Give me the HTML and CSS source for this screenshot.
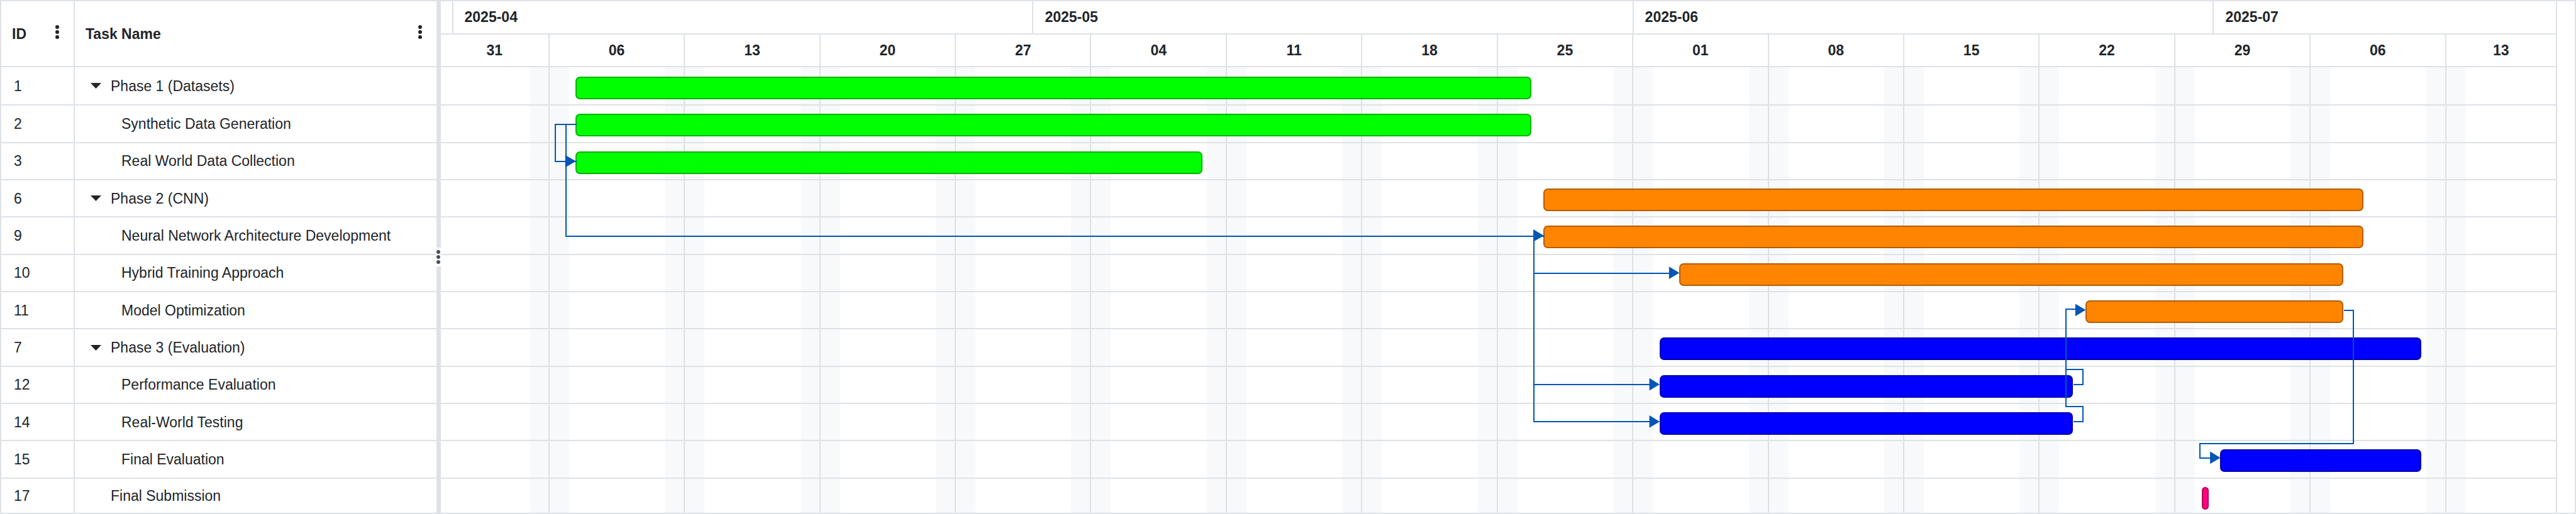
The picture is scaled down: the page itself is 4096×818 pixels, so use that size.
FILE: index.html
```html
<!DOCTYPE html>
<html lang="en">
<head>
<meta charset="utf-8">
<title>Project schedule</title>
<link rel="stylesheet" href="styles.css">
</head>
<body>
<main class="gantt">
  <table class="tasks">
    <thead>
      <tr>
        <th scope="col" class="col-id"><span>ID</span><button class="menu" type="button" aria-label="ID column menu"><svg viewBox="0 0 6 32"><circle cx="3" cy="5" r="3"/><circle cx="3" cy="13" r="3"/><circle cx="3" cy="21" r="3"/></svg></button></th>
        <th scope="col" class="col-name"><span>Task Name</span><button class="menu" type="button" aria-label="Task Name column menu"><svg viewBox="0 0 6 32"><circle cx="3" cy="5" r="3"/><circle cx="3" cy="13" r="3"/><circle cx="3" cy="21" r="3"/></svg></button></th>
      </tr>
    </thead>
    <tbody>
      <tr><td class="id">1</td><td class="name"><button class="toggle" type="button" aria-label="Collapse Phase 1"><svg viewBox="0 0 17 9"><path d="M0 0h17L8.5 9z"/></svg></button>Phase 1 (Datasets)</td></tr>
      <tr><td class="id">2</td><td class="name child">Synthetic Data Generation</td></tr>
      <tr><td class="id">3</td><td class="name child">Real World Data Collection</td></tr>
      <tr><td class="id">6</td><td class="name"><button class="toggle" type="button" aria-label="Collapse Phase 2"><svg viewBox="0 0 17 9"><path d="M0 0h17L8.5 9z"/></svg></button>Phase 2 (CNN)</td></tr>
      <tr><td class="id">9</td><td class="name child">Neural Network Architecture Development</td></tr>
      <tr><td class="id">10</td><td class="name child">Hybrid Training Approach</td></tr>
      <tr><td class="id">11</td><td class="name child">Model Optimization</td></tr>
      <tr><td class="id">7</td><td class="name"><button class="toggle" type="button" aria-label="Collapse Phase 3"><svg viewBox="0 0 17 9"><path d="M0 0h17L8.5 9z"/></svg></button>Phase 3 (Evaluation)</td></tr>
      <tr><td class="id">12</td><td class="name child">Performance Evaluation</td></tr>
      <tr><td class="id">14</td><td class="name child">Real-World Testing</td></tr>
      <tr><td class="id">15</td><td class="name child">Final Evaluation</td></tr>
      <tr><td class="id">17</td><td class="name leaf">Final Submission</td></tr>
    </tbody>
  </table>

  <div class="splitter" role="separator" aria-orientation="vertical">
    <span class="grip"><i></i><i></i><i></i></span>
  </div>

  <section class="timeline" aria-label="Timeline">
    <div class="months">
      <div></div><div>2025-04</div><div>2025-05</div><div>2025-06</div><div>2025-07</div>
    </div>
    <div class="weeks">
      <div>31</div><div>06</div><div>13</div><div>20</div><div>27</div><div>04</div><div>11</div><div>18</div><div>25</div><div>01</div><div>08</div><div>15</div><div>22</div><div>29</div><div>06</div><div>13</div>
    </div>
    <div class="chart">
      <div class="backdrop">
        <div></div><div></div><div></div><div></div><div></div><div></div><div></div><div></div><div></div><div></div><div></div><div></div><div></div><div></div><div></div><div></div>
      </div>
      <div class="lanes">
        <div class="lane"><div class="bar green" style="margin-left:6.37%;width:45.15%"></div></div>
        <div class="lane"><div class="bar green" style="margin-left:6.37%;width:45.15%"></div></div>
        <div class="lane"><div class="bar green" style="margin-left:6.37%;width:29.61%"></div></div>
        <div class="lane"><div class="bar orange" style="margin-left:52.11%;width:38.74%"></div></div>
        <div class="lane"><div class="bar orange" style="margin-left:52.11%;width:38.74%"></div></div>
        <div class="lane"><div class="bar orange" style="margin-left:58.52%;width:31.39%"></div></div>
        <div class="lane"><div class="bar orange" style="margin-left:77.72%;width:12.19%"></div></div>
        <div class="lane"><div class="bar blue" style="margin-left:57.59%;width:35.99%"></div></div>
        <div class="lane"><div class="bar blue" style="margin-left:57.59%;width:19.54%"></div></div>
        <div class="lane"><div class="bar blue" style="margin-left:57.59%;width:19.54%"></div></div>
        <div class="lane"><div class="bar blue" style="margin-left:84.08%;width:9.5%"></div></div>
        <div class="lane"><div class="bar pink" style="margin-left:83.2%;width:0.35%"></div></div>
      </div>
      <svg class="links" viewBox="1275 195 6126 1293" preserveAspectRatio="none" aria-hidden="true">
        <path class="line" d="M1668 361H1607V469H1668"/>
        <path class="line" d="M1637 361V685H4470"/>
        <path class="line" d="M4439 685V1225H4775M4439 793H4832M4439 1117H4775"/>
        <path class="line" d="M6000 1117H6028V1072H5978M6000 1225H6028V1180H5978V898H6008"/>
        <path class="line" d="M6783 901H6811V1288H6367V1330H6398"/>
        <path class="head" d="M1635 450l31 18-31 18zM4437 666l31 18-31 18zM4830 774l30 18-30 18zM4773 1098l30 18-30 18zM4773 1206l30 18-30 18zM6006 882l30 18-30 18zM6396 1311l30 18-30 18z"/>
      </svg>
    </div>
  </section>
</main>
</body>
</html>
```

FILE: styles.css
```css
* {
  box-sizing: border-box;
}

body {
  margin: 0;
  background: #fff;
  color: #212529;
  font: 23px/28px "Liberation Sans", Arial, sans-serif;
}

.gantt {
  --line: 2px solid #dee2e6;
  --rows: 111fr repeat(10, 108fr) 99fr;
  display: grid;
  grid-template-columns: 1260fr 12fr 6126fr 51fr;
  grid-template-rows: minmax(0, 1fr);
  min-height: 100vh;
  border: var(--line);
}

/* Task list */
.tasks {
  display: grid;
  grid-template-columns: 213fr 1047fr;
  grid-template-rows: 192fr var(--rows);
  min-width: 0;
}

.tasks thead,
.tasks tbody,
.tasks tr {
  display: contents;
}

.tasks th,
.tasks td {
  display: flex;
  align-items: center;
  min-width: 0;
  padding: 0;
  border-bottom: var(--line);
  white-space: nowrap;
}

.tasks tr:last-child td {
  border-bottom: 0;
}

.tasks tr > :first-child {
  border-right: var(--line);
}

.tasks th {
  justify-content: space-between;
  padding: 0 23px 0 17px;
}

.tasks .id {
  padding-left: 20px;
}

.tasks .name {
  gap: 15px;
  padding-left: 25px;
}

.tasks .leaf {
  padding-left: 57px;
}

.tasks .child {
  padding-left: 74px;
}

.menu,
.toggle {
  display: block;
  padding: 0;
  border: 0;
  background: none;
  color: inherit;
}

.menu svg {
  display: block;
  width: 6px;
  height: 32px;
  fill: currentColor;
}

.toggle svg {
  display: block;
  width: 17px;
  height: 9px;
  fill: currentColor;
}

/* Splitter */
.splitter {
  display: flex;
  align-items: center;
  background: #dee2e6;
}

.grip {
  display: flex;
  flex-direction: column;
  align-items: center;
  justify-content: center;
  gap: 2px;
  width: 100%;
  height: 30px;
  background: #fff;
}

.grip i {
  width: 6px;
  height: 6px;
  border-radius: 50%;
  background: #495057;
}

/* Timeline */
.timeline {
  display: grid;
  grid-template-rows: 96fr 96fr 1290fr;
  min-width: 0;
}

.months,
.weeks {
  display: grid;
  font-weight: 700;
}

.months {
  grid-template-columns: 36fr 1680fr 1737fr 1680fr 993fr;
}

.weeks,
.backdrop {
  grid-template-columns: 315fr repeat(14, 392fr) 321fr;
}

.months div,
.weeks div {
  display: flex;
  align-items: center;
  min-width: 0;
  border-right: var(--line);
  border-bottom: var(--line);
}

.months div {
  padding-left: 18px;
}

.months div:first-child {
  padding: 0;
}

.weeks div {
  justify-content: center;
}

.chart {
  position: relative;
  display: grid;
}

.backdrop,
.lanes {
  display: grid;
  grid-area: 1 / 1;
}

.backdrop div {
  border-right: 2px solid #e0e0e0;
  background: linear-gradient(90deg, #f8f9fb 14.4%, #fff 14.4% 86%, #f8f9fb 86%);
}

.backdrop div:first-child {
  background: linear-gradient(90deg, #fff 83%, #f8f9fb 83%);
}

.backdrop div:last-child {
  background: linear-gradient(90deg, #f8f9fb 17.8%, #fff 17.8%);
}

.lanes {
  grid-template-rows: var(--rows);
}

.lane {
  padding-top: 13px;
  border-bottom: var(--line);
}

.lane:first-child {
  padding-top: 15px;
}

.lane:last-child {
  border-bottom: 0;
}

.bar {
  height: 36px;
  border: 2px solid;
  border-radius: 7px;
}

.green {
  border-color: #00b300;
  background: #00ff00;
}

.orange {
  border-color: #b35d00;
  background: #ff8500;
}

.blue {
  border-color: #0000b3;
  background: #0000ff;
}

.pink {
  border-color: #b30059;
  background: #ff0080;
}

.links {
  position: absolute;
  inset: 0;
  width: 100%;
  height: 100%;
}

.line {
  fill: none;
  stroke: #0056b3;
  stroke-width: 2px;
  vector-effect: non-scaling-stroke;
  shape-rendering: crispEdges;
}

.head {
  fill: #0056b3;
}
```
